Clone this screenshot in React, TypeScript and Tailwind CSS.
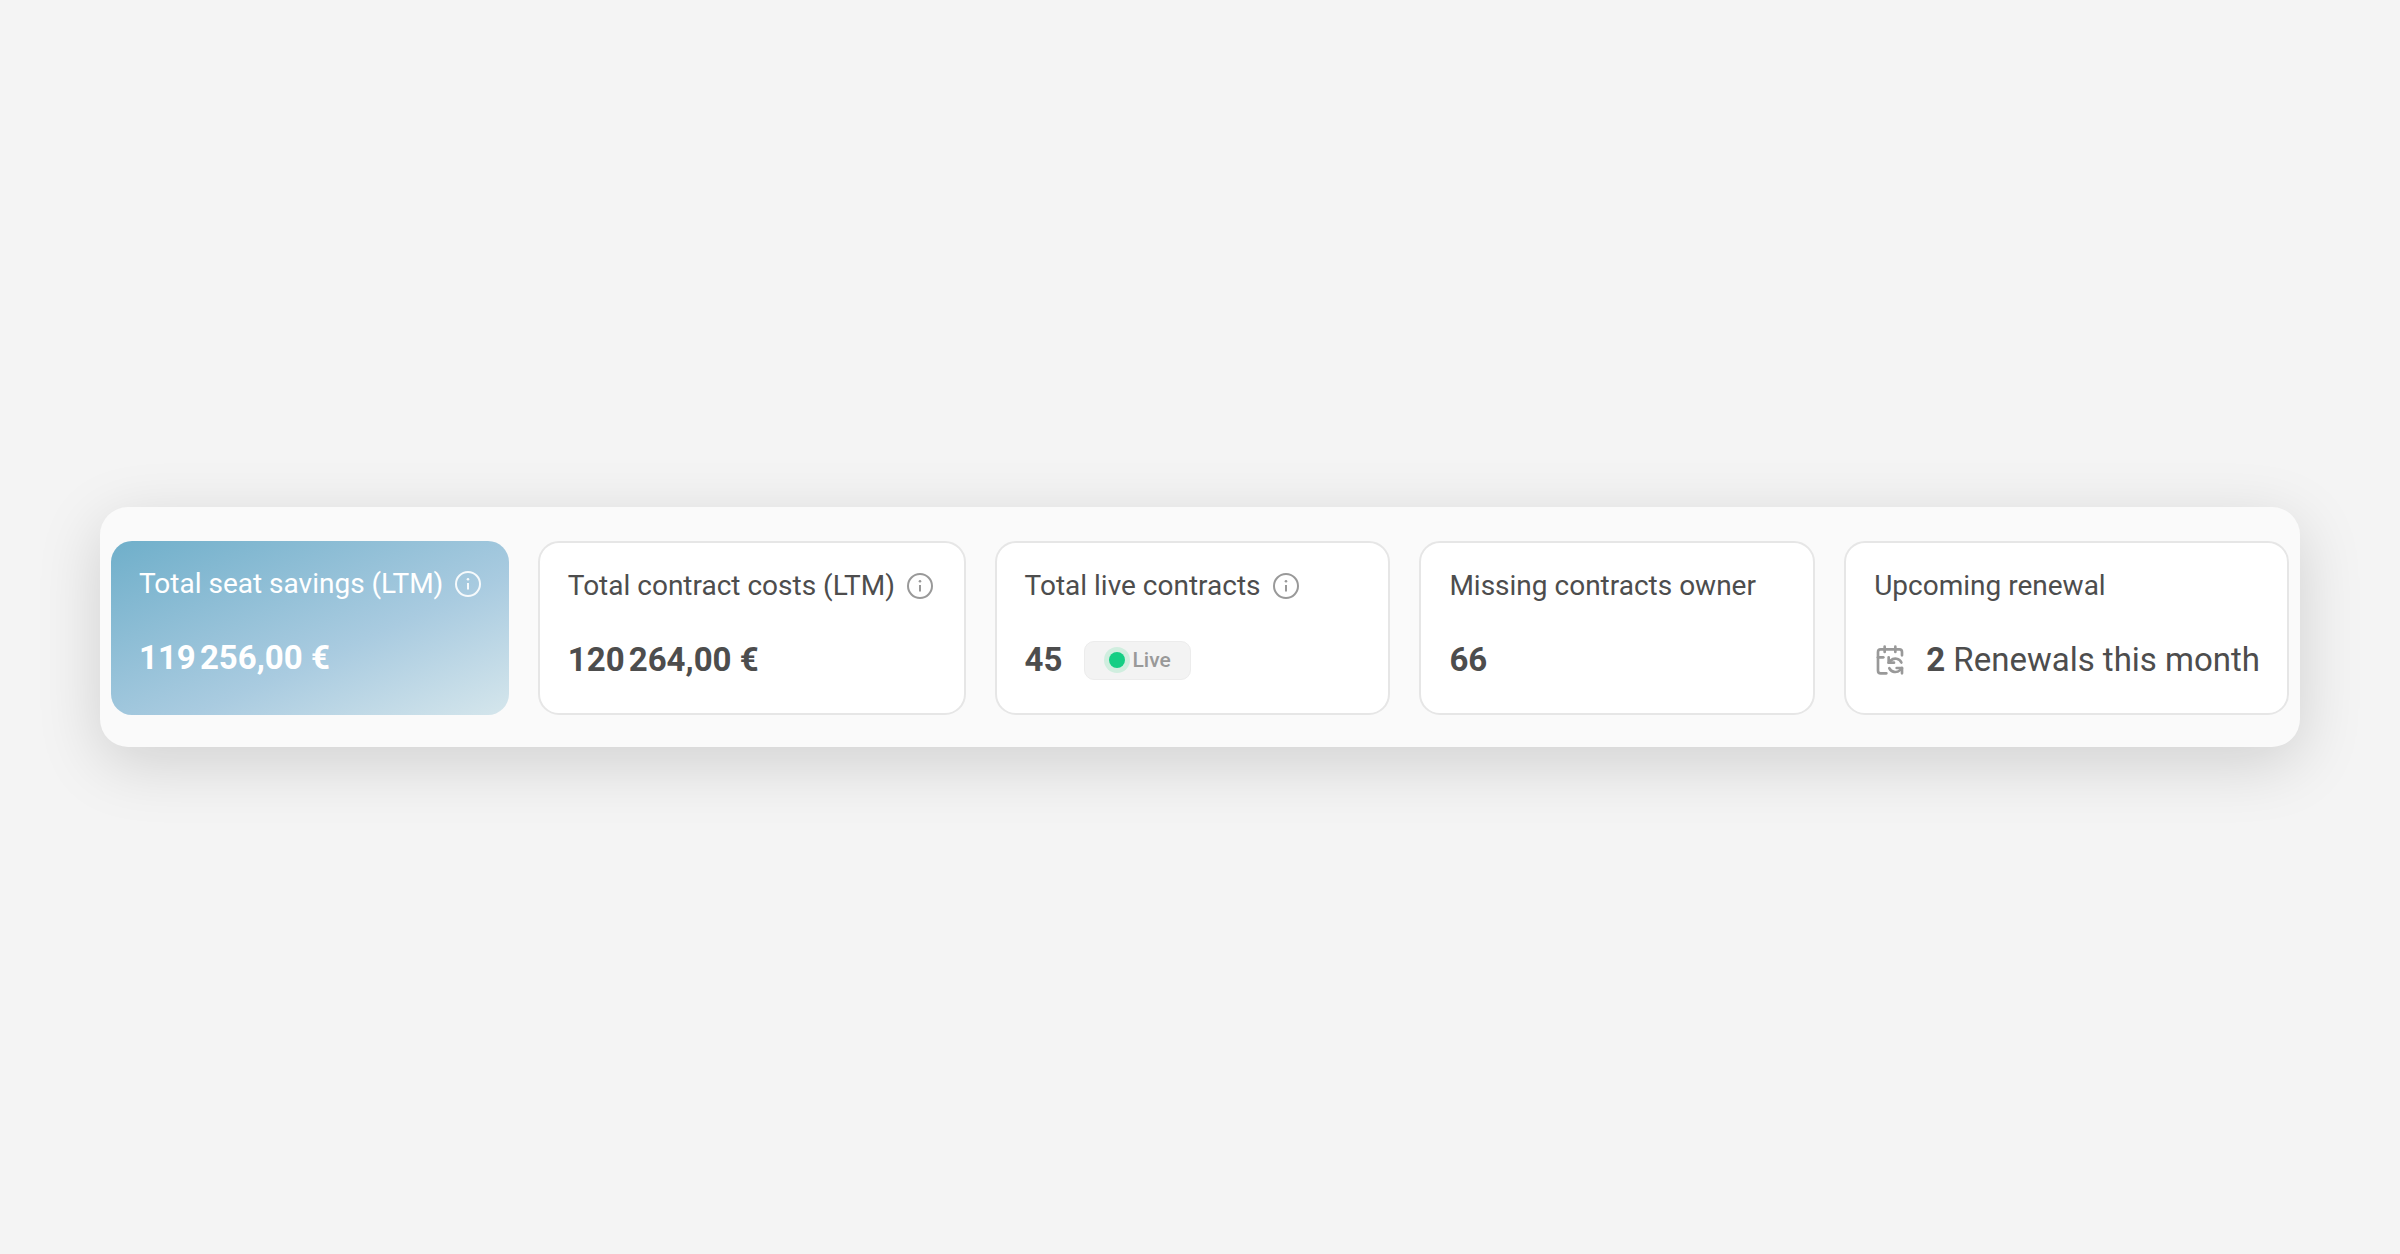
import React from 'react';
import { CalendarSync } from 'lucide-react';
import clsx from 'clsx';

interface StatCardProps {
  title: string;
  info?: boolean;
  highlighted?: boolean;
  children: React.ReactNode;
}

const InfoButton = ({ label, highlighted }: { label: string; highlighted?: boolean }) => (
  <button
    type="button"
    aria-label={`About ${label}`}
    className={clsx('shrink-0', highlighted ? 'text-white/90' : 'text-[#999999]')}
  >
    <svg viewBox="0 0 26 26" fill="none" stroke="currentColor" strokeWidth="2" className="size-[26px]">
      <circle cx="13" cy="13" r="12" />
      <path d="M13 12v6.5" />
      <circle cx="13" cy="8.3" r="1.3" fill="currentColor" stroke="none" />
    </svg>
  </button>
);

const StatCard = ({ title, info, highlighted, children }: StatCardProps) => (
  <section
    className={clsx(
      'rounded-[21px] pt-[23px] pr-6 pb-[33px] pl-7',
      highlighted
        ? 'bg-linear-to-br from-[#6fafca] via-[#a9cbe0] via-60% to-[#d5e6ec] text-white'
        : 'border-2 border-[#e6e6e6] bg-white text-[#4d4d4d]'
    )}
  >
    <div className="flex h-10 items-center gap-3">
      <h2 className="whitespace-nowrap text-[28px] leading-10">{title}</h2>
      {info && <InfoButton label={title} highlighted={highlighted} />}
    </div>
    <div className="mt-[34px] flex h-10 items-center whitespace-nowrap text-[33px] leading-10">
      {children}
    </div>
  </section>
);

const LiveBadge = () => (
  <span className="ml-[22px] flex h-[39px] items-center gap-[2px] rounded-[10px] border border-[#ececec] bg-[#f3f3f3] px-[19px] text-[21px] font-medium text-[#999999]">
    <span className="flex size-[26px] items-center justify-center rounded-full bg-[#d0eedf]">
      <span className="size-4 rounded-full bg-[#15ce84]" />
    </span>
    Live
  </span>
);

export default function App() {
  return (
    <main className="flex min-h-screen items-center justify-center bg-[#f4f4f4] px-[100px] font-['Roboto',sans-serif]">
      <div className="grid w-full grid-cols-[398fr_428fr_396fr_396fr_445fr] gap-[29px] rounded-[28px] bg-[#fafafa] px-[11px] pt-[34px] pb-8 shadow-[0_16px_64px_rgba(0,0,0,0.15)]">
        <StatCard title="Total seat savings (LTM)" info highlighted>
          <strong>119{'\u202f'}256,00 €</strong>
        </StatCard>
        <StatCard title="Total contract costs (LTM)" info>
          <strong>120{'\u202f'}264,00 €</strong>
        </StatCard>
        <StatCard title="Total live contracts" info>
          <strong>45</strong>
          <LiveBadge />
        </StatCard>
        <StatCard title="Missing contracts owner">
          <strong>66</strong>
        </StatCard>
        <StatCard title="Upcoming renewal">
          <CalendarSync className="mr-5 size-8 shrink-0 text-[#999999]" />
          <p>
            <strong>2</strong> Renewals this month
          </p>
        </StatCard>
      </div>
    </main>
  );
}
